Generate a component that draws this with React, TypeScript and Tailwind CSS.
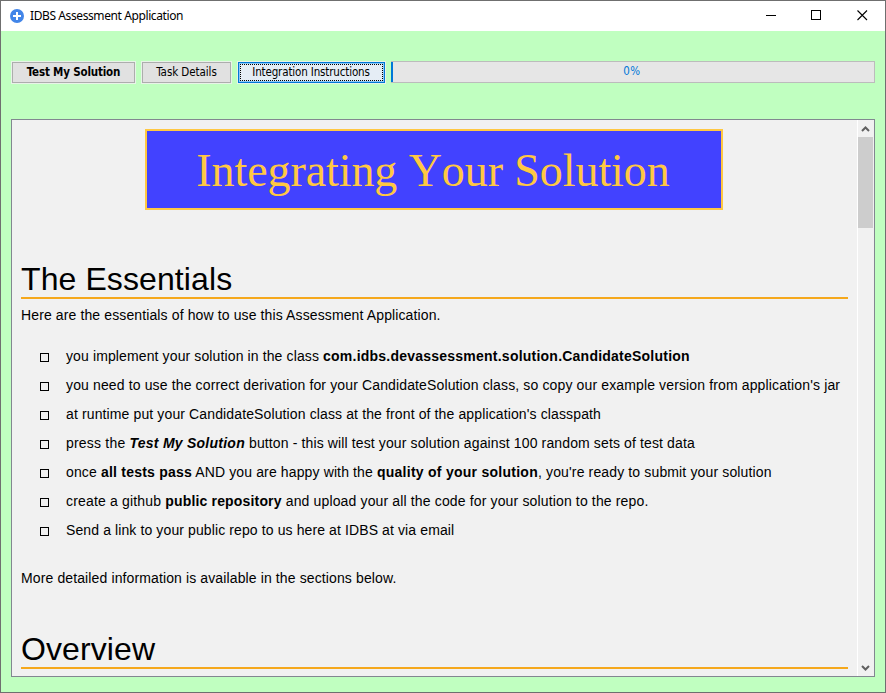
import type { ReactNode } from "react";

function Item({ children }: { children: ReactNode }) {
  return (
    <li className="flex h-[29px] items-start whitespace-pre">
      <span className="mt-[5px] mr-[17px] ml-[19px] size-[9px] shrink-0 border border-black" />
      <span>{children}</span>
    </li>
  );
}

function SectionHeading({ children }: { children: ReactNode }) {
  return (
    <h2 className="h-[38px] w-[827px] shrink-0 border-b-2 border-[#f5a81c] text-[32px] leading-9 tracking-[0.1px]">
      {children}
    </h2>
  );
}

function TitleBar() {
  return (
    <header className="flex h-[30px] shrink-0 items-center bg-white pl-[9px]">
      <svg width="14" height="14" viewBox="0 0 14 14" className="-mt-px shrink-0">
        <circle cx="7" cy="7" r="7" fill="#4285e8" />
        <path d="M7 3v8M3 7h8" stroke="#fff" strokeWidth="2" />
      </svg>
      <h1 className="ml-[6px] flex-1 font-['Noto_Sans',sans-serif] text-[12px] leading-4 tracking-[-0.4px]">
        IDBS Assessment Application
      </h1>
      <div className="-mt-px mr-[17px] flex items-center">
        <svg width="11" height="11" viewBox="0 0 11 11" shapeRendering="crispEdges">
          <path d="M0 5.5h10" stroke="#000" />
        </svg>
        <svg width="11" height="11" viewBox="0 0 11 11" shapeRendering="crispEdges" fill="none" className="ml-[34px]">
          <path d="M.5 .5h9v9h-9z" stroke="#000" />
        </svg>
        <svg width="11" height="11" viewBox="0 0 11 11" fill="none" className="ml-[35px]">
          <path d="M.5 .5l9.5 9.5M10 .5L.5 10" stroke="#000" strokeWidth="1.1" />
        </svg>
      </div>
    </header>
  );
}

function Toolbar() {
  return (
    <div className="mt-[30px] ml-[10px] flex h-[22px] shrink-0 items-start font-['DejaVu_Sans_Condensed','DejaVu_Sans',sans-serif] text-[11.5px] leading-[13px]">
      <button className="mt-px ml-px h-[21px] w-[123px] border border-[#adadad] bg-[#e1e1e1] font-bold tracking-[-0.18px] ring-1 ring-[#e8f3e8]">
        Test My Solution
      </button>
      <button className="mt-px ml-[7px] h-[21px] w-[89px] border border-[#adadad] bg-[#e1e1e1] tracking-[-0.07px] ring-1 ring-[#e8f3e8]">
        Task Details
      </button>
      <button className="mt-px ml-[7px] h-[21px] w-[147px] border border-[#0078d7] bg-[#8cc8f5] p-px tracking-[-0.15px] ring-1 ring-[#e8f3e8]">
        <span className="flex h-[17px] items-center justify-center border border-dotted border-black bg-[#e5edf5] pr-px">
          Integration Instructions
        </span>
      </button>
      <div className="ml-[6px] flex h-[22px] w-[484px] border-y border-r border-[#bcbcbc] bg-[#e6e6e6]">
        <div className="w-[2px] bg-[#0078d7]" />
        <div className="flex-1 pt-[3px] pr-[3px] text-center tracking-[0.5px] text-[#0078d7]">0%</div>
      </div>
    </div>
  );
}

function ScrollBar() {
  return (
    <div className="flex w-[17px] shrink-0 flex-col border-l border-white bg-[#f1f1f1]">
      <div className="flex h-[17px] w-[15px] items-center justify-center pt-px">
        <svg width="9" height="7" viewBox="0 0 9 7" fill="none">
          <path d="M1 5l3.5-3.5L8 5" stroke="#606060" strokeWidth="2" />
        </svg>
      </div>
      <div className="h-[91px] w-[15px] bg-[#cdcdcd]" />
      <div className="flex-1" />
      <div className="flex h-[17px] w-[15px] items-center justify-center">
        <svg width="9" height="7" viewBox="0 0 9 7" fill="none">
          <path d="M1 2l3.5 3.5L8 2" stroke="#606060" strokeWidth="2" />
        </svg>
      </div>
    </div>
  );
}

function Instructions() {
  return (
    <main className="flex flex-1 flex-col pt-[9px] pl-[9px] text-[14px] leading-4">
      <div className="ml-[124px] flex h-[81px] w-[578px] shrink-0 items-center justify-center border-2 border-[#ffc842] bg-[#4242ff] pt-[2px] pr-[2px] font-['Liberation_Serif','Times_New_Roman',serif] text-[46px] leading-[51px] tracking-[-0.08px] whitespace-pre text-[#ffc842] [font-kerning:none]">
        Integrating Your Solution
      </div>
      <div className="h-[51px] shrink-0" />
      <SectionHeading>The Essentials</SectionHeading>
      <p className="mt-2 tracking-[0.12px]">
        Here are the essentials of how to use this Assessment Application.
      </p>
      <ul className="mt-[25px]">
        <Item>
          <span className="tracking-[0.12px]">you implement your solution in the class </span>
          <b className="tracking-[0.23px]">com.idbs.devassessment.solution.CandidateSolution</b>
        </Item>
        <Item>
          <span className="tracking-[0.135px]">
            you need to use the correct derivation for your CandidateSolution class, so copy our example version from application's jar
          </span>
        </Item>
        <Item>
          <span className="tracking-[0.125px]">
            at runtime put your CandidateSolution class at the front of the application's classpath
          </span>
        </Item>
        <Item>
          <span className="tracking-[0.2px]">press the </span>
          <b className="tracking-[0.25px] italic">Test My Solution</b>
          <span className="tracking-[0.125px]"> button - this will test your solution against 100 random sets of test data</span>
        </Item>
        <Item>
          <span className="tracking-[0.14px]">once </span>
          <b className="tracking-[0.22px]">all tests pass</b>
          <span className="tracking-[0.13px]"> AND you are happy with the </span>
          <b className="tracking-[0.26px]">quality of your solution</b>
          <span className="tracking-[0.14px]">, you're ready to submit your solution</span>
        </Item>
        <Item>
          <span className="tracking-[0.17px]">create a github </span>
          <b className="tracking-[0.17px]">public repository</b>
          <span className="tracking-[0.145px]"> and upload your all the code for your solution to the repo.</span>
        </Item>
        <Item>
          <span className="tracking-[0.11px]">Send a link to your public repo to us here at IDBS at via email</span>
        </Item>
      </ul>
      <p className="mt-[19px] mb-[45px] tracking-[0.12px]">
        More detailed information is available in the sections below.
      </p>
      <SectionHeading>Overview</SectionHeading>
    </main>
  );
}

export default function App() {
  return (
    <div className="flex h-[693px] w-[886px] flex-col overflow-hidden border border-[#6f6f6f] bg-[#c0ffc0] font-['Liberation_Sans',Arial,sans-serif] text-black">
      <TitleBar />
      <Toolbar />
      <div className="mt-9 ml-[10px] flex h-[558px] w-[864px] shrink-0 overflow-hidden border border-[#828790] bg-[#f1f1f1]">
        <Instructions />
        <ScrollBar />
      </div>
    </div>
  );
}
